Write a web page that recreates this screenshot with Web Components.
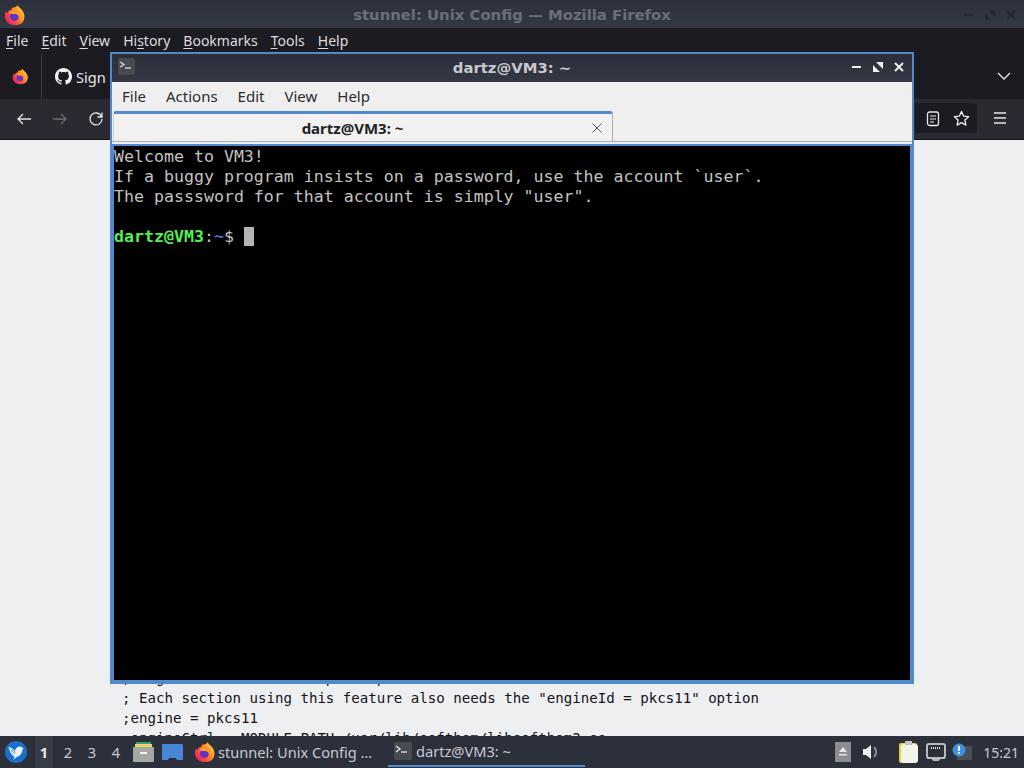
<!doctype html>
<html>
<head>
<meta charset="utf-8">
<title>stunnel: Unix Config</title>
<style>
html, body { margin: 0; padding: 0; background: #eeeff0; overflow: hidden; }
</style>
</head>
<body>
<desk-top>
	<fx-window></fx-window>
	<term-window slot="floating"></term-window>
	<panel-bar slot="panel"></panel-bar>
</desk-top>

<script>
const SANS = `"Noto Sans", "DejaVu Sans", sans-serif`;
const WM = `"DejaVu Sans", sans-serif`;
const MONO = `"DejaVu Sans Mono", monospace`;
const BLUE = "#5288cc";

class Base extends HTMLElement {
	constructor() {
		super();
		this.attachShadow({mode:"open"});
		this.shadowRoot.innerHTML = this.html;
	}
}

class FxLogo extends Base {
	get html() {
		let size = this.getAttribute("size") || 24;
		let id = "g" + Math.random().toString(36).slice(2, 8);
		return `
<style>:host { display: inline-flex; flex: none; }</style>
<svg width="${size}" height="${size}" viewBox="0 0 24 24">
	<defs>
		<linearGradient id="${id}" x1="1" y1="0.1" x2="0" y2="0.9">
			<stop offset="0" stop-color="#ffdf3f"/>
			<stop offset="0.35" stop-color="#ff9a26"/>
			<stop offset="0.75" stop-color="#f5384a"/>
			<stop offset="1" stop-color="#e0246a"/>
		</linearGradient>
	</defs>
	<path fill="url(#${id})" d="M15 1c1 3 3 3 5 6 2 3 3 6 2 9-1 5-5 7-10 7C6 23 1 19 1 13c0-2 .5-4 1.500-5.500 0 1 .5 2 1 2.500C5 7 7 6 9 6c-1-1-1-2 0-2 3 0 5-1 6-3z"/>
	<circle cx="11.500" cy="13.500" r="5" fill="#5b37c4"/>
	<path fill="#ff9a2a" d="M6 10c2-3 7-4 10-1 2 2 2 6 0 8 1-3-1-6-4-6-2 0-3 0-6-1z"/>
</svg>`;
	}
}
customElements.define("fx-logo", FxLogo);

class DeskTop extends Base {
	get html() { return `
<style>
:host { display: flex; flex-direction: column; position: relative; width: 1024px; height: 768px; overflow: hidden; }
::slotted(fx-window) { flex: 1; min-height: 0; }
</style>
<slot></slot>
<slot name="floating"></slot>
<slot name="panel"></slot>`; }
}
customElements.define("desk-top", DeskTop);

class FxWindow extends Base {
	get html() { return `
<style>
:host { display: flex; flex-direction: column; background: #eeeff0; font-family: ${SANS}; overflow: hidden; }
.title { height: 28px; flex: none; position: relative; display: flex; align-items: center; justify-content: center; padding-top: 1px; box-sizing: border-box;
	background: linear-gradient(#2c303b, #343844); color: #6a6e78; font: 700 14.850px ${WM}; }
.title fx-logo { position: absolute; left: 4px; top: 4px; }
.wm { position: absolute; right: 7px; top: 9px; display: flex; gap: 9px; }
.menu { height: 26px; flex: none; display: flex; align-items: center; gap: 13px; padding: 0 6px 2px; box-sizing: border-box; background: #1c1b22; color: #dcdcdf; font-size: 14px; }
.menu u { text-underline-offset: 2px; }
.tabs { height: 45px; flex: none; display: flex; align-items: center; background: #1c1b22; color: #fbfbfe; position: relative; }
.pin { width: 42px; height: 100%; display: flex; align-items: center; justify-content: center; border-right: 1px solid #3a3941; box-sizing: border-box; }
.gh { display: flex; align-items: center; gap: 4px; padding-left: 13px; color: #e4e4e6; font-size: 14.600px; }
.chev { position: absolute; right: 13px; top: 18px; }
.nav { height: 40px; flex: none; display: flex; align-items: center; background: #2b2a33; position: relative; }
.nav svg { position: absolute; }
.field { position: absolute; left: 915px; top: 4px; width: 62px; height: 30px; background: #1c1b22; border-radius: 0 4px 4px 0; }
.page { flex: 1; min-height: 0; overflow: hidden; margin: 0; padding: 528px 0 0 122px; box-sizing: border-box;
	font: 14.120px/20px ${MONO}; color: #15141a; white-space: pre; border-top: 1px solid #16151b; }
</style>
<div class="title">
	<fx-logo size="22"></fx-logo>
	<span>stunnel: Unix Config — Mozilla Firefox</span>
	<div class="wm">
		<svg width="12" height="12" viewBox="0 0 12 12"><path d="M1 6h10" stroke="#25282f" stroke-width="2"/></svg>
		<svg width="12" height="12" viewBox="0 0 12 12"><path d="M1 4v7h7zM11 8V1H4z" fill="#25282f"/></svg>
		<svg width="12" height="12" viewBox="0 0 12 12"><path d="M2 2l8 8M10 2l-8 8" stroke="#25282f" stroke-width="2"/></svg>
	</div>
</div>
<div class="menu">
	<span><u>F</u>ile</span><span><u>E</u>dit</span><span><u>V</u>iew</span><span>Hi<u>s</u>tory</span><span><u>B</u>ookmarks</span><span><u>T</u>ools</span><span><u>H</u>elp</span>
</div>
<div class="tabs">
	<div class="pin"><fx-logo size="17"></fx-logo></div>
	<div class="gh">
		<svg width="17" height="17" viewBox="0 0 16 16"><path fill="#f2f2f2" d="M8 0C3.580 0 0 3.580 0 8c0 3.540 2.290 6.530 5.470 7.590.4.070.55-.17.55-.38 0-.19-.01-.82-.01-1.490-2.010.37-2.530-.49-2.690-.94-.09-.23-.48-.94-.82-1.130-.28-.15-.68-.52-.01-.53.63-.01 1.080.58 1.230.82.720 1.210 1.870.87 2.330.66.070-.52.280-.87.510-1.070-1.780-.2-3.640-.89-3.640-3.950 0-.87.310-1.590.820-2.150-.08-.2-.36-1.020.08-2.120 0 0 .67-.21 2.200.82.640-.18 1.320-.27 2-.27s1.360.09 2 .27c1.530-1.040 2.200-.82 2.200-.82.440 1.100.160 1.920.080 2.120.510.560.820 1.270.820 2.150 0 3.070-1.870 3.750-3.650 3.950.290.250.540.730.540 1.480 0 1.070-.01 1.930-.01 2.200 0 .21.150.46.550.38A8.010 8.010 0 0 0 16 8c0-4.420-3.580-8-8-8z"/></svg>
		<span>Sign</span>
	</div>
	<svg class="chev" width="14" height="9" viewBox="0 0 14 9"><path d="M1 1l6 6 6-6" fill="none" stroke="#e8e8ea" stroke-width="1.300"/></svg>
</div>
<div class="nav">
	<svg style="left:16px;top:12px" width="16" height="16" viewBox="0 0 16 16"><path d="M15 8H2M7 3L2 8l5 5" fill="none" stroke="#e4e4e6" stroke-width="1.300"/></svg>
	<svg style="left:52px;top:12px" width="16" height="16" viewBox="0 0 16 16"><path d="M1 8h13M9 3l5 5-5 5" fill="none" stroke="#6c6b72" stroke-width="1.300"/></svg>
	<svg style="left:88px;top:12px" width="16" height="16" viewBox="0 0 16 16"><path d="M13.500 5.500A6 6 0 1 0 14 8M14 1.500v4.500H9.500" fill="none" stroke="#e4e4e6" stroke-width="1.300"/></svg>
	<div class="field"></div>
	<svg style="left:926px;top:12px" width="14" height="16" viewBox="0 0 14 16"><rect x="1.500" y="1" width="11" height="13.500" rx="2" fill="none" stroke="#e8e8ea" stroke-width="1.300"/><path d="M4 5h6M4 8h6M4 11h4" stroke="#e8e8ea" stroke-width="1.200"/></svg>
	<svg style="left:953px;top:11px" width="17" height="17" viewBox="0 0 17 17"><path d="M8.500 1.500l2.100 4.600 5 .6-3.700 3.400 1 5-4.400-2.500-4.400 2.500 1-5L1.400 6.700l5-.6z" fill="none" stroke="#eeeeef" stroke-width="1.300" stroke-linejoin="round"/></svg>
	<svg style="left:993px;top:12px" width="14" height="14" viewBox="0 0 14 14"><path d="M1 2h12M1 7h12M1 12h12" stroke="#e8e8ea" stroke-width="1.300"/></svg>
</div>
<pre class="page">; Engine module loaders path: pin
; Each section using this feature also needs the "engineId = pkcs11" option
;engine = pkcs11
;engineCtrl = MODULE_PATH:/usr/lib/softhsm/libsofthsm2.so</pre>`; }
}
customElements.define("fx-window", FxWindow);

class TermWindow extends Base {
	get html() { return `
<style>
:host { display: flex; flex-direction: column; position: absolute; left: 110px; top: 52px; width: 804px; height: 632px;
	box-sizing: border-box; border: 2px solid ${BLUE}; background: #efefef; font-family: ${SANS}; }
.title { height: 28px; flex: none; display: flex; align-items: center; justify-content: center; position: relative; padding-bottom: 2px; box-sizing: border-box;
	background: linear-gradient(#2b2e38, #343844); color: #c6c8cd; font: 700 14.800px ${WM}; }
.app { position: absolute; left: 6px; top: 4px; }
.btns { position: absolute; right: 7px; top: 7px; display: flex; gap: 9px; }
.menu { height: 29px; flex: none; display: flex; align-items: center; gap: 20px; padding: 0 10px 1px; box-sizing: border-box; color: #2b2b2b; font-size: 15px; background: #efefef; }
.tabrow { height: 31px; flex: none; margin-bottom: 2px; border-bottom: 1px solid #a9adb3; box-sizing: border-box; }
.tab { width: 500px; height: 30px; box-sizing: border-box; margin-left: 1px; border-top: 3px solid ${BLUE}; border-right: 1px solid #a9adb3; border-left: 1px solid #cfd1d4;
	display: flex; align-items: center; background: #f1f1f1; border-radius: 3px 3px 0 0; color: #222; font-weight: 700; font-size: 15px; }
.tab span { flex: 1; text-align: center; }
.tab svg { margin-right: 9px; }
.screen { flex: 1; min-height: 0; background: #000; border: 2px solid ${BLUE}; margin: 0; padding: 1px 0 0;
	font: 16.600px/20px ${MONO}; color: #c2c2c2; white-space: pre; overflow: hidden; }
.u { color: #55ee55; font-weight: 700; }
.p { color: #5470d0; font-weight: 700; }
.cur { display: inline-block; width: 10px; height: 19px; background: #b4b4b4; vertical-align: top; }
</style>
<div class="title">
	<svg class="app" width="17" height="17" viewBox="0 0 17 17"><rect width="17" height="17" rx="2" fill="#474a50"/><path d="M2 4l4 2.500-4 2.500" fill="none" stroke="#ddd" stroke-width="1.300"/><path d="M7 10h6" stroke="#ddd" stroke-width="1.300"/></svg>
	<span>dartz@VM3: ~</span>
	<div class="btns">
		<svg width="12" height="12" viewBox="0 0 12 12"><path d="M1 6h9" stroke="#eee" stroke-width="2"/></svg>
		<svg width="12" height="12" viewBox="0 0 12 12"><path d="M1 4v7h7zM11 8V1H4z" fill="#eee"/></svg>
		<svg width="12" height="12" viewBox="0 0 12 12"><path d="M2 2l8 8M10 2l-8 8" stroke="#eee" stroke-width="2"/></svg>
	</div>
</div>
<div class="menu"><span>File</span><span>Actions</span><span>Edit</span><span>View</span><span>Help</span></div>
<div class="tabrow">
	<div class="tab"><span>dartz@VM3: ~</span>
		<svg width="12" height="12" viewBox="0 0 12 12"><path d="M1.500 1.500l9 9M10.500 1.500l-9 9" stroke="#555" stroke-width="1"/></svg>
	</div>
</div>
<pre class="screen">Welcome to VM3!
If a buggy program insists on a password, use the account \`user\`.
The passsword for that account is simply "user".

<span class="u">dartz@VM3</span>:<span class="p">~</span>$ <span class="cur"></span></pre>`; }
}
customElements.define("term-window", TermWindow);

class PanelBar extends Base {
	get html() { return `
<style>
:host { display: flex; align-items: center; height: 32px; flex: none; background: #2c303b; color: #c8cad0; font-family: ${SANS}; font-size: 14.600px; position: relative; }
.start { margin-left: 5px; display: flex; }
.ws { display: flex; margin-left: 5px; }
.ws span { width: 24px; height: 32px; display: flex; align-items: center; justify-content: center; }
.ws .on { color: #e8e8ea; font-weight: 700; background: linear-gradient(90deg, transparent 3px, #373c47 3px, #373c47 21px, transparent 21px); }
.launch { display: flex; align-items: center; gap: 8px; margin-left: 5px; }
.task { display: flex; align-items: center; height: 32px; box-sizing: border-box; }
.t1 { width: 194px; margin-left: 11px; gap: 2px; }
.t2 { width: 197px; padding: 1px 0 0 6px; gap: 4px; height: 31px; align-self: flex-start; border-bottom: 2px solid ${BLUE}; }
.tray { position: absolute; right: 0; top: 0; height: 32px; display: flex; align-items: center; }
.clock { margin: 0 5px 0 11px; font-size: 14px; }
</style>
<div class="start">
	<svg width="22" height="22" viewBox="0 0 22 22"><circle cx="11" cy="11" r="11" fill="#1a6fcb"/><path d="M3.500 6c3 .5 5 2 6.500 3.500C11 7 12.500 5.500 15 5.500c1 0 2 .5 2.500 1.500l1.500.5-1.500.7c0 4-2.500 7-6 7.800L8.500 19l1-3C6.500 14 4.500 10.500 3.500 6z" fill="#eaf3fb"/><path d="M6 8.500c1 2 2.500 3.500 4 4.500M7.500 7.800c1 1.500 2 2.700 3 3.500" stroke="#1a6fcb" stroke-width=".8" fill="none"/></svg>
</div>
<div class="ws"><span class="on">1</span><span>2</span><span>3</span><span>4</span></div>
<div class="launch">
	<svg width="21" height="20" viewBox="0 0 21 20"><rect x="3" y="0" width="15" height="3" fill="#3f9a6a"/><rect x="2" y="2" width="17" height="4" fill="#e7d76a"/><rect x="0" y="5" width="21" height="15" rx="1" fill="#a5a8a3"/><rect x="7" y="10" width="7" height="2" fill="#f4f4f4"/></svg>
	<svg width="21" height="16" viewBox="0 0 21 16"><path d="M0 1a1 1 0 0 1 1-1h19a1 1 0 0 1 1 1v15h-6l-1-2H7l-1 2H0z" fill="#4a86d8"/></svg>
</div>
<div class="task t1"><fx-logo size="22"></fx-logo><span>stunnel: Unix Config …</span></div>
<div class="task t2">
	<svg width="18" height="18" viewBox="0 0 18 18"><rect width="18" height="18" rx="2" fill="#474a50"/><path d="M2 4l4 3-4 3" fill="none" stroke="#e6e6e6" stroke-width="1.300"/><path d="M7 10h6" stroke="#e6e6e6" stroke-width="1.300"/></svg>
	<span>dartz@VM3: ~</span>
</div>
<div class="tray">
	<svg width="16" height="20" viewBox="0 0 16 20" style="margin-right:12px"><rect width="16" height="20" fill="#8b8d90"/><path d="M8 5l4 5H4z M4 12h8v1.500H4z" fill="#e6e6e6"/></svg>
	<svg width="17" height="16" viewBox="0 0 17 16" style="margin-right:19px"><path d="M0 5h3l5-4v14l-5-4H0z" fill="#eee"/><path d="M11 3a7 7 0 0 1 0 10" fill="none" stroke="#8b8d95" stroke-width="2"/></svg>
	<svg width="20" height="22" viewBox="0 0 20 22" style="margin-right:7px"><rect x="0" y="2" width="18" height="20" rx="2" fill="#e6cf3a"/><rect x="2" y="3" width="17" height="19" rx="3" fill="#f4f3ea"/><rect x="6" y="0" width="7" height="4" fill="#c4c4c4"/></svg>
	<svg width="20" height="18" viewBox="0 0 20 18" style="margin-right:6px"><rect x="1" y="1" width="18" height="14" rx="2" fill="#2b2e36" stroke="#b9bbbf" stroke-width="2"/><path d="M5 5h10" stroke="#e4e4e4" stroke-width="2" stroke-dasharray="1 1"/><path d="M1 15h5l2 2h4l2-2h5" fill="none" stroke="#b9bbbf" stroke-width="2"/></svg>
	<svg width="20" height="18" viewBox="0 0 20 18"><rect x="5" y="3" width="15" height="14" fill="#4a4d52"/><circle cx="7" cy="7" r="6.500" fill="#3f8fe0"/><rect x="6" y="3" width="2" height="5" fill="#fff"/><rect x="6" y="9" width="2" height="2" fill="#fff"/></svg>
	<span class="clock">15:21</span>
</div>`; }
}
customElements.define("panel-bar", PanelBar);
</script>
</body>
</html>
